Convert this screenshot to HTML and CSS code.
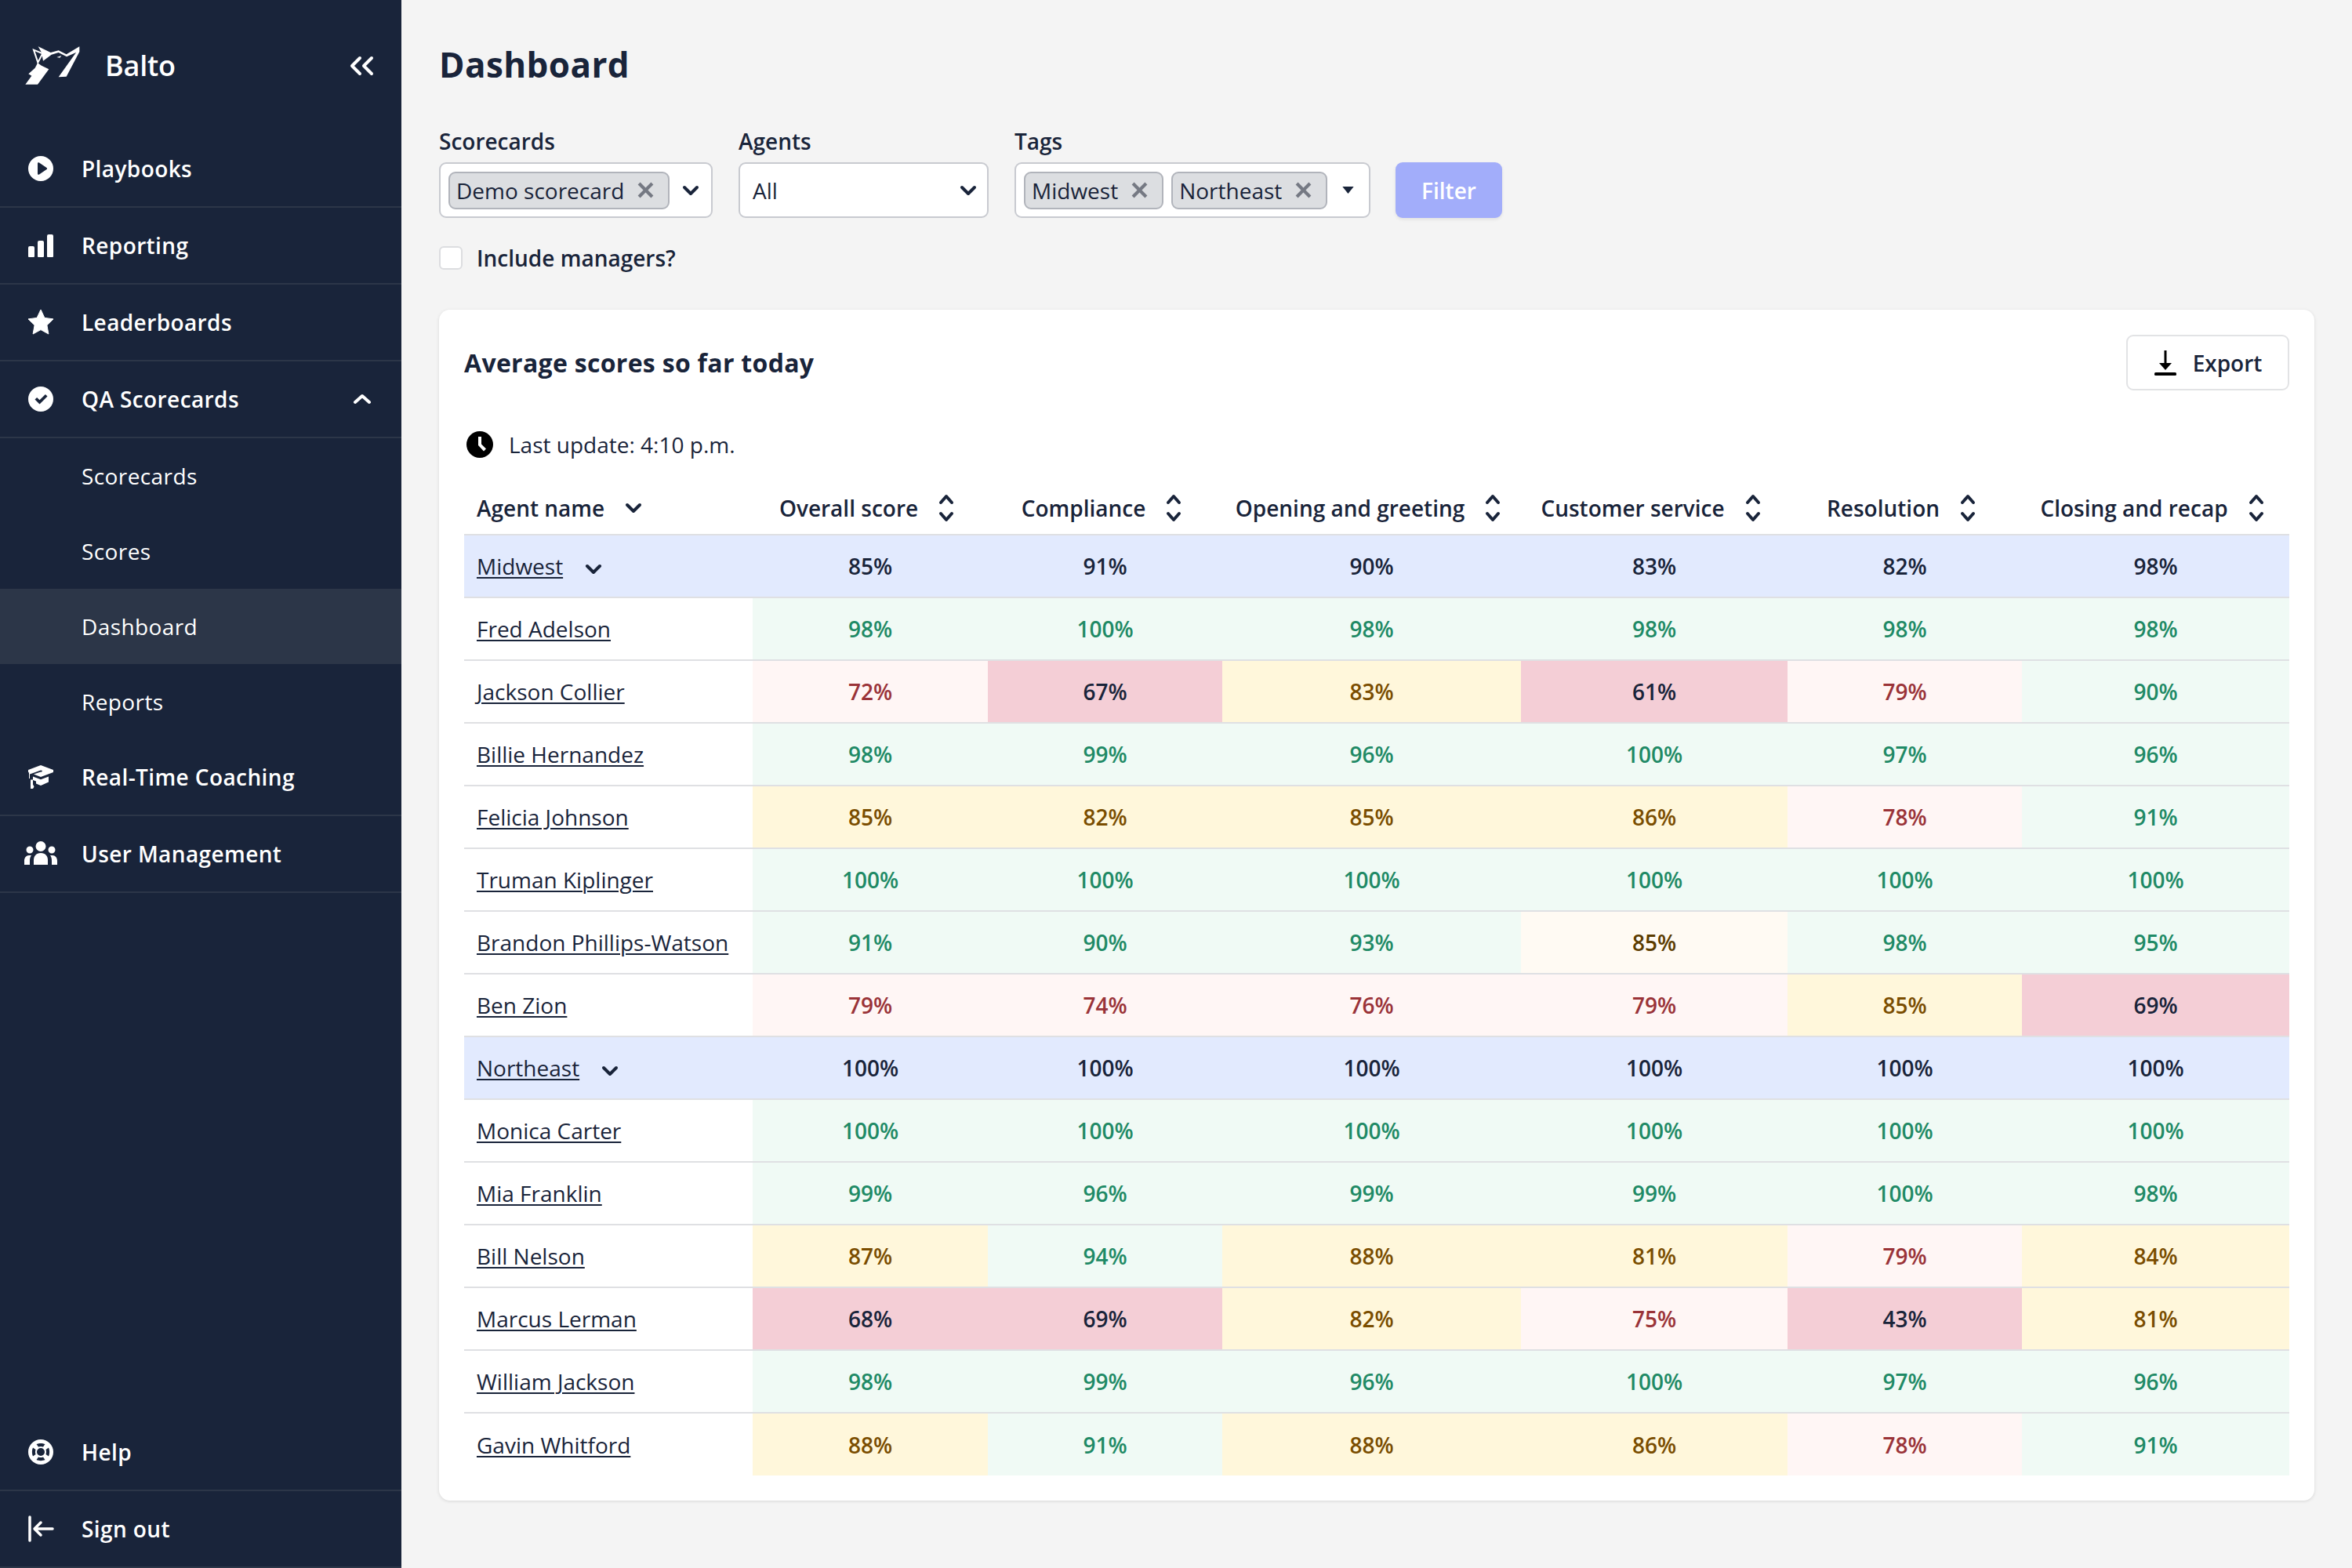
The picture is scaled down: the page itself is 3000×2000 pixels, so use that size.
FILE: index.html
```html
<!DOCTYPE html>
<html lang="en">

<head>
    <meta charset="UTF-8">
    <title>Dashboard</title>
    <link rel="stylesheet" href="styles.css">
</head>

<body>
    <div class="app">
        <div class="sidebar">
            <div class="brand">
                <svg class="logo" viewBox="38 44 208 147" width="70" height="49">
                    <path fill="#fff" d="M100 118L128 132 85 190 38 190 62 157 50 150 75 127 85 108Z" />
                    <path fill="#fff" d="M87 45L135 68 165 60 195 75 245 45 245 65 195 160 165 162 232 68 196 84 165 68 138 76 106 100 100 68Z" />
                    <path fill="#fff" d="M158 86L176 80 170 88Z" />
                    <path fill="none" stroke="#fff" stroke-width="6" d="M70 58L104 72 86 106Z" />
                </svg>
                <span class="brand-name">Balto</span>
                <svg class="collapse" viewBox="0 0 32 26" width="32" height="26">
                    <path fill="none" stroke="#fff" stroke-width="4" stroke-linecap="round" stroke-linejoin="round" d="M14 3L4 13l10 10M29 3L19 13l10 10" />
                </svg>
            </div>
            <div class="nav">
                <div class="nav-item">
                    <svg class="nav-icon" viewBox="0 0 36 36"><path fill="#fff" fill-rule="evenodd" d="M18 2a16 16 0 1 0 0 32 16 16 0 0 0 0-32zm-4 9.500c0-1 1-1.600 2-1l9.500 6.400c.8.600.8 1.700 0 2.200L16 25.500c-1 .6-2 0-2-1z" /></svg>
                    <span>Playbooks</span>
                </div>
                <div class="nav-item">
                    <svg class="nav-icon" viewBox="0 0 36 36"><path fill="#fff" d="M2 21a2 2 0 0 1 2-2h4a2 2 0 0 1 2 2v11a1 1 0 0 1-1 1H3a1 1 0 0 1-1-1zM14 14a2 2 0 0 1 2-2h4a2 2 0 0 1 2 2v18a1 1 0 0 1-1 1h-6a1 1 0 0 1-1-1zM26 6a2 2 0 0 1 2-2h4a2 2 0 0 1 2 2v26a1 1 0 0 1-1 1h-6a1 1 0 0 1-1-1z" /></svg>
                    <span>Reporting</span>
                </div>
                <div class="nav-item">
                    <svg class="nav-icon" viewBox="0 0 36 36"><path fill="#fff" d="M18 2l4.900 10.400 11.100 1.500-8.100 7.900 2 11.200L18 27.600 8.100 33l2-11.200L2 13.900l11.100-1.500z" stroke="#fff" stroke-linejoin="round" stroke-width="1" /></svg>
                    <span>Leaderboards</span>
                </div>
                <div class="nav-item">
                    <svg class="nav-icon" viewBox="0 0 36 36"><path fill="#fff" fill-rule="evenodd" d="M18 2a16 16 0 1 0 0 32 16 16 0 0 0 0-32zm8.500 12.600L16.500 24.500l-6-6 2.600-2.600 3.400 3.400 7.400-7.400z" /></svg>
                    <span>QA Scorecards</span>
                    <svg class="nav-caret" viewBox="0 0 24 14" width="24" height="14"><path fill="none" stroke="#fff" stroke-width="4" stroke-linecap="round" stroke-linejoin="round" d="M3 11l9-8 9 8" /></svg>
                </div>
                <div class="sub-item">Scorecards</div>
                <div class="sub-item">Scores</div>
                <div class="sub-item active">Dashboard</div>
                <div class="sub-item">Reports</div>
                <div class="nav-item">
                    <svg class="nav-icon" viewBox="0 0 36 36"><path fill="#fff" d="M18 3l16 6v3L18 18l-9-3.500 9-3 1 .3 1-1.800-2-.6L4 14.500V20l-1 0V12.500L2 12V9zM8 17.500l10 3.800 10-3.800v7L18 29l-6-2.500v-3L8 22zM5 21.500h3v6l1.500 3-1.500 2.500H5z" /></svg>
                    <span>Real-Time Coaching</span>
                </div>
                <div class="nav-item">
                    <svg class="nav-icon wide" viewBox="0 0 42 36"><path fill="#fff" d="M21 2a6.500 6.500 0 1 1 0 13 6.500 6.500 0 0 1 0-13zM7 8.500a4.500 4.500 0 1 1 0 9 4.500 4.500 0 0 1 0-9zM35 8.500a4.500 4.500 0 1 1 0 9 4.500 4.500 0 0 1 0-9zM21 17c6 0 9 4 9 9v6H12v-6c0-5 3-9 9-9zM0 32v-5c0-4 2.500-7 6-7h3c-1.500 2-2 4-2 7v5zM42 32v-5c0-4-2.500-7-6-7h-3c1.500 2 2 4 2 7v5z" /></svg>
                    <span>User Management</span>
                </div>
            </div>
            <div class="nav nav-bottom">
                <div class="nav-item">
                    <svg class="nav-icon" viewBox="0 0 36 36"><path fill="#fff" fill-rule="evenodd" d="M18 2a16 16 0 1 0 0 32 16 16 0 0 0 0-32zM18 13a5 5 0 1 0 0 10 5 5 0 0 0 0-10zM12.500 8C15.500 6.500 20.500 6.500 23.500 8L21 11.500C19.200 10.800 16.800 10.800 15 11.500zM12.500 28C15.500 29.500 20.500 29.500 23.500 28L21 24.500C19.200 25.200 16.800 25.200 15 24.500zM8 12.500C6.500 15.500 6.500 20.500 8 23.500L11.500 21C10.800 19.200 10.800 16.800 11.500 15zM28 12.500C29.500 15.500 29.500 20.500 28 23.500L24.500 21C25.200 19.200 25.200 16.800 24.500 15z" /></svg>
                    <span>Help</span>
                </div>
                <div class="nav-item">
                    <svg class="nav-icon" viewBox="0 0 36 36"><path fill="none" stroke="#fff" stroke-width="3.500" stroke-linecap="round" stroke-linejoin="round" d="M4 3v30M33 18H11M18 10l-8 8 8 8" /></svg>
                    <span>Sign out</span>
                </div>
            </div>
        </div>

        <div class="main">
            <h1>Dashboard</h1>
            <div class="filters">
                <div class="field">
                    <label>Scorecards</label>
                    <div class="select select-scorecards">
                        <span class="tag">Demo scorecard<svg class="tag-x" viewBox="0 0 20 20"><path fill="none" stroke="#757983" stroke-width="4" d="M2 2l16 16M18 2L2 18" /></svg></span>
                        <svg class="chev" viewBox="0 0 22 14"><path fill="none" stroke="#19243a" stroke-width="4" stroke-linecap="round" stroke-linejoin="round" d="M3 3l8 8 8-8" /></svg>
                    </div>
                </div>
                <div class="field">
                    <label>Agents</label>
                    <div class="select select-agents">
                        <span class="select-value">All</span>
                        <svg class="chev" viewBox="0 0 22 14"><path fill="none" stroke="#19243a" stroke-width="4" stroke-linecap="round" stroke-linejoin="round" d="M3 3l8 8 8-8" /></svg>
                    </div>
                </div>
                <div class="field">
                    <label>Tags</label>
                    <div class="select select-tags">
                        <span class="tag">Midwest<svg class="tag-x" viewBox="0 0 20 20"><path fill="none" stroke="#757983" stroke-width="4" d="M2 2l16 16M18 2L2 18" /></svg></span>
                        <span class="tag">Northeast<svg class="tag-x" viewBox="0 0 20 20"><path fill="none" stroke="#757983" stroke-width="4" d="M2 2l16 16M18 2L2 18" /></svg></span>
                        <svg class="caret" viewBox="0 0 16 10"><path fill="#19243a" d="M0 0h16L8 10z" /></svg>
                    </div>
                </div>
                <button class="filter-btn">Filter</button>
            </div>
            <div class="check-row">
                <span class="checkbox"></span>
                <span>Include managers?</span>
            </div>

            <div class="card">
                <div class="card-head">
                    <h2>Average scores so far today</h2>
                    <button class="export">
                        <svg viewBox="0 0 30 36" width="30" height="36"><path fill="none" stroke="#000" stroke-width="3" d="M15 2v22" /><path fill="#000" d="M7 18h16l-8 9z" /><rect x="1" y="30" width="28" height="4" rx="1.500" fill="#000" /></svg>
                        Export
                    </button>
                </div>
                <div class="last-update">
                    <svg viewBox="0 0 34 34" width="34" height="34"><path fill="#000" fill-rule="evenodd" d="M17 0a17 17 0 1 0 0 34 17 17 0 0 0 0-34zm-2 7h4v9.500l6 6-3 3-7-7.500z" /></svg>
                    Last update: 4:10 p.m.
                </div>

                <table class="scores">
                    <colgroup>
                        <col class="c-name"><col class="c-1"><col class="c-2"><col class="c-3"><col class="c-4"><col class="c-5"><col class="c-6">
                    </colgroup>
                    <thead>
                        <tr>
                            <th class="name-cell"><span class="th-in">Agent name<svg class="chev small" viewBox="0 0 22 14"><path fill="none" stroke="#19243a" stroke-width="4" stroke-linecap="round" stroke-linejoin="round" d="M3 3l8 8 8-8" /></svg></span></th>
                            <th><span class="th-in">Overall score<svg class="sort" viewBox="0 0 20 36"><path fill="none" stroke="#19243a" stroke-width="4" stroke-linecap="round" stroke-linejoin="round" d="M3 11l7-8 7 8M3 25l7 8 7-8" /></svg></span></th>
                            <th><span class="th-in">Compliance<svg class="sort" viewBox="0 0 20 36"><path fill="none" stroke="#19243a" stroke-width="4" stroke-linecap="round" stroke-linejoin="round" d="M3 11l7-8 7 8M3 25l7 8 7-8" /></svg></span></th>
                            <th><span class="th-in">Opening and greeting<svg class="sort" viewBox="0 0 20 36"><path fill="none" stroke="#19243a" stroke-width="4" stroke-linecap="round" stroke-linejoin="round" d="M3 11l7-8 7 8M3 25l7 8 7-8" /></svg></span></th>
                            <th><span class="th-in">Customer service<svg class="sort" viewBox="0 0 20 36"><path fill="none" stroke="#19243a" stroke-width="4" stroke-linecap="round" stroke-linejoin="round" d="M3 11l7-8 7 8M3 25l7 8 7-8" /></svg></span></th>
                            <th><span class="th-in">Resolution<svg class="sort" viewBox="0 0 20 36"><path fill="none" stroke="#19243a" stroke-width="4" stroke-linecap="round" stroke-linejoin="round" d="M3 11l7-8 7 8M3 25l7 8 7-8" /></svg></span></th>
                            <th><span class="th-in">Closing and recap<svg class="sort" viewBox="0 0 20 36"><path fill="none" stroke="#19243a" stroke-width="4" stroke-linecap="round" stroke-linejoin="round" d="M3 11l7-8 7 8M3 25l7 8 7-8" /></svg></span></th>
                        </tr>
                    </thead>
                    <tbody>
                        <tr class="group">
                            <td class="name-cell"><a>Midwest</a><svg class="chev small" viewBox="0 0 22 14"><path fill="none" stroke="#19243a" stroke-width="4" stroke-linecap="round" stroke-linejoin="round" d="M3 3l8 8 8-8" /></svg></td>
                            <td>85%</td><td>91%</td><td>90%</td><td>83%</td><td>82%</td><td>98%</td>
                        </tr>
                        <tr>
                            <td class="name-cell"><a>Fred Adelson</a></td>
                            <td class="good">98%</td><td class="good">100%</td><td class="good">98%</td><td class="good">98%</td><td class="good">98%</td><td class="good">98%</td>
                        </tr>
                        <tr>
                            <td class="name-cell"><a>Jackson Collier</a></td>
                            <td class="low">72%</td><td class="bad">67%</td><td class="warn">83%</td><td class="bad">61%</td><td class="low">79%</td><td class="good">90%</td>
                        </tr>
                        <tr>
                            <td class="name-cell"><a>Billie Hernandez</a></td>
                            <td class="good">98%</td><td class="good">99%</td><td class="good">96%</td><td class="good">100%</td><td class="good">97%</td><td class="good">96%</td>
                        </tr>
                        <tr>
                            <td class="name-cell"><a>Felicia Johnson</a></td>
                            <td class="warn">85%</td><td class="warn">82%</td><td class="warn">85%</td><td class="warn">86%</td><td class="low">78%</td><td class="good">91%</td>
                        </tr>
                        <tr>
                            <td class="name-cell"><a>Truman Kiplinger</a></td>
                            <td class="good">100%</td><td class="good">100%</td><td class="good">100%</td><td class="good">100%</td><td class="good">100%</td><td class="good">100%</td>
                        </tr>
                        <tr>
                            <td class="name-cell"><a>Brandon Phillips-Watson</a></td>
                            <td class="good">91%</td><td class="good">90%</td><td class="good">93%</td><td class="pale">85%</td><td class="good">98%</td><td class="good">95%</td>
                        </tr>
                        <tr>
                            <td class="name-cell"><a>Ben Zion</a></td>
                            <td class="low">79%</td><td class="low">74%</td><td class="low">76%</td><td class="low">79%</td><td class="warn">85%</td><td class="bad">69%</td>
                        </tr>
                        <tr class="group">
                            <td class="name-cell"><a>Northeast</a><svg class="chev small" viewBox="0 0 22 14"><path fill="none" stroke="#19243a" stroke-width="4" stroke-linecap="round" stroke-linejoin="round" d="M3 3l8 8 8-8" /></svg></td>
                            <td>100%</td><td>100%</td><td>100%</td><td>100%</td><td>100%</td><td>100%</td>
                        </tr>
                        <tr>
                            <td class="name-cell"><a>Monica Carter</a></td>
                            <td class="good">100%</td><td class="good">100%</td><td class="good">100%</td><td class="good">100%</td><td class="good">100%</td><td class="good">100%</td>
                        </tr>
                        <tr>
                            <td class="name-cell"><a>Mia Franklin</a></td>
                            <td class="good">99%</td><td class="good">96%</td><td class="good">99%</td><td class="good">99%</td><td class="good">100%</td><td class="good">98%</td>
                        </tr>
                        <tr>
                            <td class="name-cell"><a>Bill Nelson</a></td>
                            <td class="warn">87%</td><td class="good">94%</td><td class="warn">88%</td><td class="warn">81%</td><td class="low">79%</td><td class="warn">84%</td>
                        </tr>
                        <tr>
                            <td class="name-cell"><a>Marcus Lerman</a></td>
                            <td class="bad">68%</td><td class="bad">69%</td><td class="warn">82%</td><td class="low">75%</td><td class="bad">43%</td><td class="warn">81%</td>
                        </tr>
                        <tr>
                            <td class="name-cell"><a>William Jackson</a></td>
                            <td class="good">98%</td><td class="good">99%</td><td class="good">96%</td><td class="good">100%</td><td class="good">97%</td><td class="good">96%</td>
                        </tr>
                        <tr>
                            <td class="name-cell"><a>Gavin Whitford</a></td>
                            <td class="warn">88%</td><td class="good">91%</td><td class="warn">88%</td><td class="warn">86%</td><td class="low">78%</td><td class="good">91%</td>
                        </tr>
                    </tbody>
                </table>
            </div>
        </div>
    </div>
</body>

</html>
```

FILE: styles.css
```css
* {
    box-sizing: border-box;
}

body {
    margin: 0;
    background: #f4f4f4;
    color: #19243a;
    font-family: "Open Sans", sans-serif;
    font-size: 28px;
}

.app {
    display: flex;
    height: 2000px;
}

/* sidebar */
.sidebar {
    width: 512px;
    flex-shrink: 0;
    background: #19243a;
    color: #fff;
    display: flex;
    flex-direction: column;
    letter-spacing: 0.4px;
}

.brand {
    height: 167px;
    display: flex;
    align-items: center;
    padding-left: 32px;
    padding-right: 35px;
}

.brand-name {
    margin-left: 32px;
    font-size: 36px;
    font-weight: 600;
    letter-spacing: -0.2px;
    flex: 1;
}

.nav-item {
    height: 98px;
    display: flex;
    align-items: center;
    padding-left: 34px;
    padding-right: 38px;
    border-bottom: 2px solid #2c3648;
    font-weight: 600;
}

.nav-icon {
    width: 36px;
    height: 36px;
    margin-right: 34px;
    flex-shrink: 0;
}

.nav-icon.wide {
    width: 42px;
    margin-left: -3px;
    margin-right: 31px;
}

.nav-item span {
    flex: 1;
}

.sub-item {
    height: 96px;
    display: flex;
    align-items: center;
    padding-left: 104px;
}

.sub-item.active {
    background: #2c3648;
}

.nav-bottom {
    margin-top: auto;
}

/* main */
.main {
    flex: 1;
    padding: 0 48px;
}

h1 {
    margin: 0;
    height: 164px;
    display: flex;
    align-items: center;
    font-size: 44px;
    font-weight: 700;
    letter-spacing: 0.4px;
}

.filters {
    display: flex;
    align-items: flex-end;
    gap: 33px;
    margin-top: -3px;
}

.field label {
    display: block;
    font-weight: 600;
    margin-bottom: 8px;
    line-height: 38px;
}

.select {
    height: 71px;
    display: flex;
    align-items: center;
    background: #fff;
    border: 2px solid #c8cad0;
    border-radius: 9px;
}

.select-scorecards {
    width: 349px;
    padding: 0 15px 0 10px;
}

.select-agents {
    width: 319px;
    padding: 0 13px 0 16px;
}

.select-tags {
    width: 454px;
    padding: 0 10px;
    gap: 10px;
}

.select-value {
    flex: 1;
}

.tag {
    height: 48px;
    display: flex;
    align-items: center;
    padding: 0 18px 0 8px;
    background: #dcdee1;
    border: 2px solid #b1b4bb;
    border-radius: 9px;
}

.tag-x {
    width: 21px;
    height: 21px;
    margin-left: 17px;
}

.chev {
    width: 22px;
    height: 14px;
    margin-left: auto;
}

.caret {
    width: 15px;
    height: 9px;
    margin-left: auto;
    margin-right: 9px;
}

.filter-btn {
    width: 136px;
    height: 71px;
    margin-left: -1px;
    background: #a2adfa;
    border: none;
    border-radius: 9px;
    color: #fff;
    font-family: inherit;
    font-size: 28px;
    font-weight: 600;
    box-shadow: 0 2px 4px rgba(0, 0, 0, 0.08);
}

.check-row {
    display: flex;
    align-items: center;
    gap: 18px;
    margin-top: 32px;
    font-weight: 600;
}

.checkbox {
    width: 30px;
    height: 30px;
    background: #fff;
    border: 2px solid #dcdde0;
    border-radius: 6px;
}

.card {
    margin-top: 47px;
    height: 1519px;
    padding: 32px;
    background: #fff;
    border-radius: 14px;
    box-shadow: 0 1px 4px rgba(0, 0, 0, 0.12);
}

.card-head {
    display: flex;
    align-items: center;
    justify-content: space-between;
}

h2 {
    margin: 0;
    font-size: 32px;
    font-weight: 700;
    letter-spacing: 0.3px;
}

.export {
    width: 208px;
    height: 71px;
    display: flex;
    align-items: center;
    justify-content: center;
    gap: 20px;
    background: #fff;
    border: 2px solid #e2e3e5;
    border-radius: 9px;
    color: #19243a;
    font-family: inherit;
    font-size: 28px;
    font-weight: 600;
}

.last-update {
    display: flex;
    align-items: center;
    gap: 20px;
    margin-top: 50px;
    padding-left: 3px;
}

.scores {
    width: 2328px;
    margin-top: 28px;
    border-collapse: collapse;
    table-layout: fixed;
}

.c-name { width: 368px; }
.c-1 { width: 300px; }
.c-2 { width: 299px; }
.c-3 { width: 381px; }
.c-4 { width: 340px; }
.c-5 { width: 299px; }
.c-6 { width: 341px; }

.scores th {
    height: 68px;
    padding-right: 10px;
    font-weight: 600;
    text-align: center;
    border-bottom: 2px solid #dfe0e3;
}

.th-in {
    display: inline-flex;
    align-items: center;
    gap: 26px;
}

.scores td {
    height: 80px;
    padding: 0;
    font-weight: 600;
    text-align: center;
    border-bottom: 2px solid #dfe0e3;
}

.scores tr:last-child td {
    border-bottom: none;
}

.scores .name-cell {
    text-align: left;
    padding-left: 16px;
}

.name-cell a {
    font-weight: 400;
    text-decoration: underline;
    text-decoration-thickness: 2px;
    text-underline-offset: 3px;
}

.chev.small {
    margin-left: 28px;
    width: 22px;
    height: 14px;
}

.th-in .chev.small {
    margin-left: 0;
}

.sort {
    width: 20px;
    height: 36px;
}

.group td {
    background: #e2eafe;
}

.good {
    background: #f0faf5;
    color: #1f8a66;
}

.warn {
    background: #fff7db;
    color: #7a4d00;
}

.pale {
    background: #fffaf3;
    color: #5c3c00;
}

.low {
    background: #fff6f5;
    color: #9a3338;
}

.bad {
    background: #f4ced6;
}
```
